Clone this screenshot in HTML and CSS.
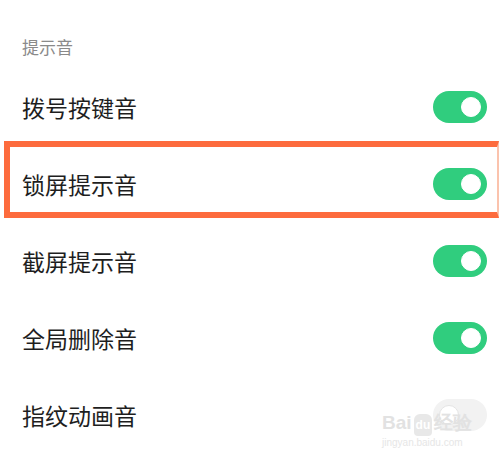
FILE: index.html
```html
<html>

<head>
  <meta charset="utf8">
  <title>提示音</title>
  <link rel="stylesheet" href="styles.css">
</head>

<body>
  <section class="group">
    <h2 class="group-title">提示音</h2>
    <div class="row">
      <span class="label">拨号按键音</span>
      <span class="switch on"></span>
    </div>
    <div class="row marked">
      <span class="label">锁屏提示音</span>
      <span class="switch on"></span>
    </div>
    <div class="row">
      <span class="label">截屏提示音</span>
      <span class="switch on"></span>
    </div>
    <div class="row">
      <span class="label">全局删除音</span>
      <span class="switch on"></span>
    </div>
    <div class="row">
      <span class="label">指纹动画音</span>
      <span class="switch"></span>
    </div>
  </section>
  <div class="watermark">
    <div class="wm-logo">Bai<span class="wm-du">du</span>经验</div>
    <div class="wm-url">jingyan.baidu.com</div>
  </div>
</body>

</html>
```

FILE: styles.css
```css
body {
  margin: 0;
  background: #FFF;
  font-family: "Noto Sans CJK SC", "Noto Sans", sans-serif;
  overflow: hidden;
  position: relative;
  height: 463px;
}

.group-title {
  margin: 0;
  height: 68px;
  box-sizing: border-box;
  padding: 35px 0 0 22px;
  font-size: 17px;
  line-height: 24px;
  font-weight: normal;
  color: #8A8A8A;
}

.row {
  position: relative;
  height: 77px;
  display: flex;
  align-items: center;
  justify-content: space-between;
  padding: 0 13px 0 22px;
}

.label {
  font-size: 23px;
  color: #1E1E1E;
}

.switch {
  position: relative;
  width: 54px;
  height: 32px;
  border-radius: 16px;
  background: #F2F2F2;
}

.switch::after {
  content: "";
  position: absolute;
  top: 6px;
  left: 6px;
  width: 18px;
  height: 18px;
  border-radius: 50%;
  background: #FFF;
  border: 1px solid #E4E4E4;
}

.switch.on {
  background: #30CD7E;
}

.switch.on::after {
  left: 28px;
  border-color: #FFF;
}

.marked::before {
  content: "";
  position: absolute;
  left: 4px;
  right: 1px;
  top: -4px;
  bottom: 4px;
  border: 6px solid #FD6B3D;
  border-right: 2px solid #FBC3AD;
}

.watermark {
  position: absolute;
  left: 382px;
  top: 412px;
  color: #E2E2E2;
  font-family: "Liberation Sans", sans-serif;
}

.wm-logo {
  font-size: 19px;
  font-weight: bold;
  line-height: 22px;
}

.wm-du {
  display: inline-block;
  font-size: 12px;
  margin: 0 2px;
  padding: 0 2px;
  border-radius: 6px 6px 4px 4px;
  background: #E8E8E8;
  color: #FFF;
}

.wm-url {
  font-size: 10px;
  line-height: 14px;
  color: #E6E6E6;
}
```
